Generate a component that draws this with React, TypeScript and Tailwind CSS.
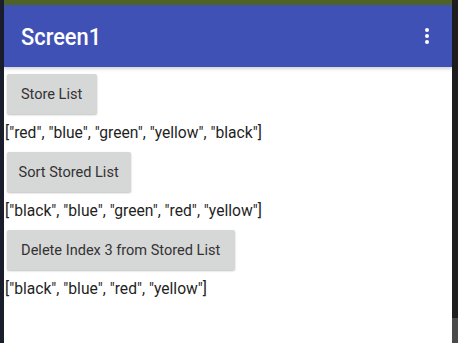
import React from "react";

const font = { fontFamily: "Roboto, 'Liberation Sans', sans-serif" };

function Btn({ label, w }: { label: string; w: string }) {
  return (
    <div
      className={`ml-[3px] my-1 h-10 ${w} flex items-center justify-center rounded-[2px] bg-[#d6d7d7] text-[15px] text-[#333333] shadow-[0_1px_2px_rgba(0,0,0,0.25)]`}
    >
      <span className="scale-x-[0.97] origin-center whitespace-nowrap">{label}</span>
    </div>
  );
}

function ListText({ text }: { text: string }) {
  return (
    <div className="h-[30px] flex items-center pl-[1px] text-[17px] text-[#1f1f1f]">
      <span className="scale-x-[0.92] origin-left whitespace-nowrap">{text}</span>
    </div>
  );
}

export default function App() {
  return (
    <div className="w-[458px] h-[343px] flex bg-[#1e1e1e] overflow-hidden" style={font}>
      <div className="w-[4px] h-full bg-[#1a1d2c]" />
      <div className="flex-1 flex flex-col">
        <div className="h-[5px] bg-[#4f6228]" />
        <div className="relative z-10 h-[62px] bg-[#3f51b5] flex items-center justify-between pl-[17px] pr-[23px] shadow-[0_2px_3px_rgba(0,0,0,0.18)]">
          <span className="text-white text-[23px] font-medium mt-[4px] scale-x-[0.95] origin-left">Screen1</span>
          <div className="flex flex-col gap-[2px]">
            <div className="w-[4px] h-[4px] rounded-full bg-white" />
            <div className="w-[4px] h-[4px] rounded-full bg-white" />
            <div className="w-[4px] h-[4px] rounded-full bg-white" />
          </div>
        </div>
        <div className="flex-1 bg-white flex flex-col pt-[3px]">
          <Btn label="Store List" w="w-[90px]" />
          <ListText text={'["red", "blue", "green", "yellow", "black"]'} />
          <Btn label="Sort Stored List" w="w-[124px]" />
          <ListText text={'["black", "blue", "green", "red", "yellow"]'} />
          <Btn label="Delete Index 3 from Stored List" w="w-[228px]" />
          <ListText text={'["black", "blue", "red", "yellow"]'} />
        </div>
      </div>
      <div className="w-[6px] h-full flex flex-col">
        <div className="flex-1 bg-[#1e1e1e]" />
        <div className="h-[25px] bg-[#4a4a4a]" />
      </div>
    </div>
  );
}
